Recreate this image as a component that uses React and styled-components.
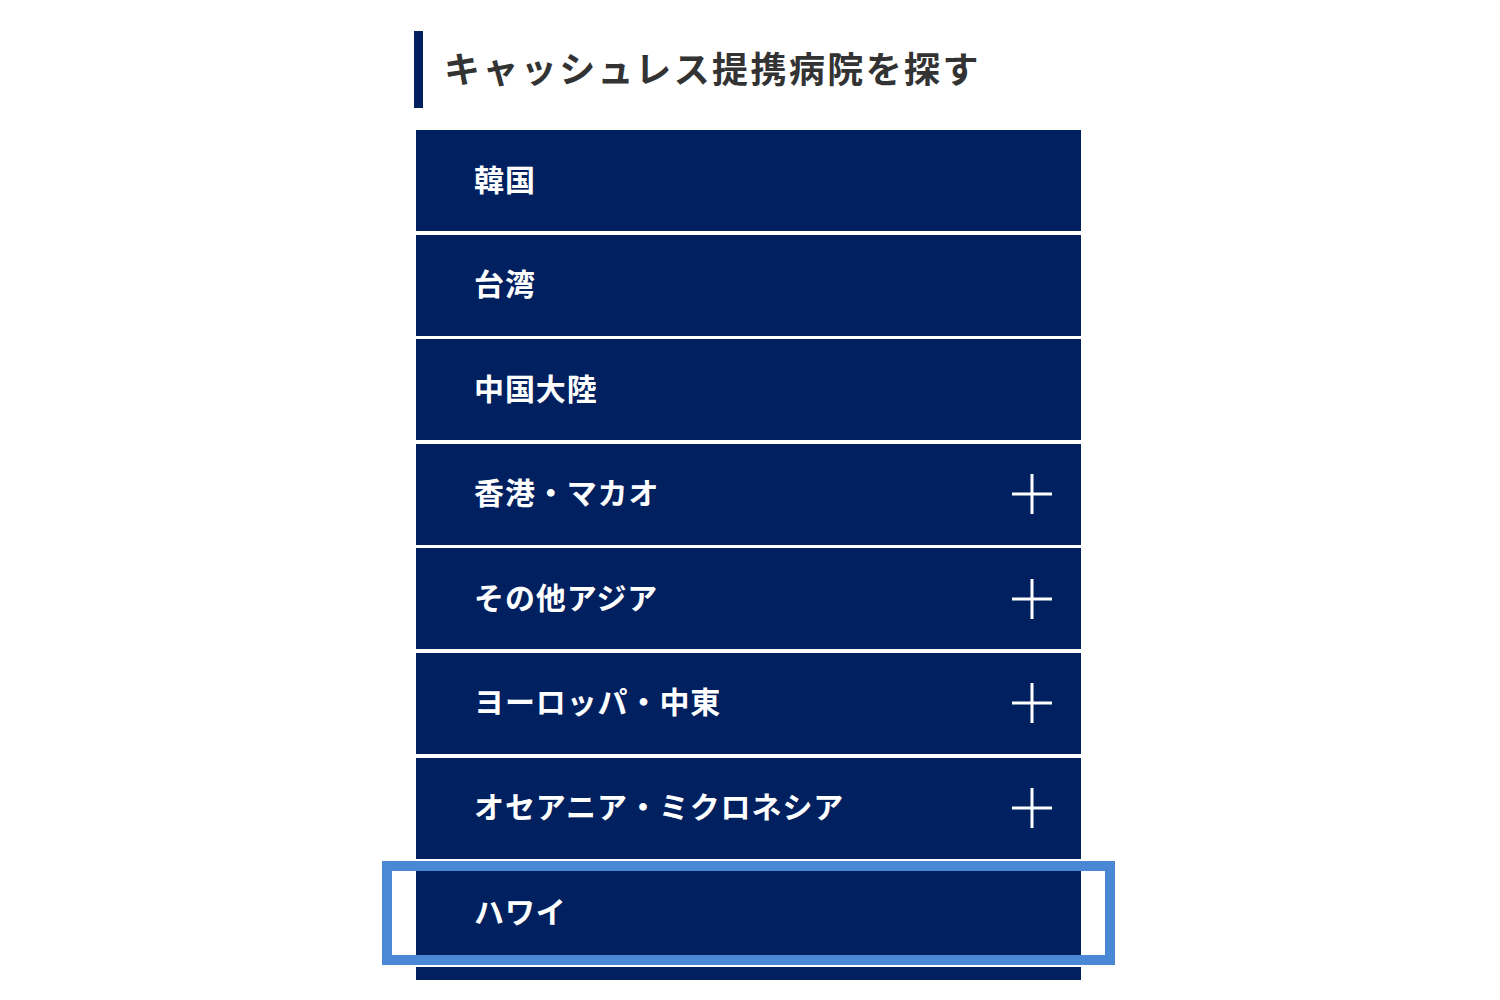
import React from "react";
import styled, { createGlobalStyle } from "styled-components";

const Global = createGlobalStyle`
  html, body {
    margin: 0;
    padding: 0;
    background: #ffffff;
  }
  body {
    font-family: "Noto Sans CJK JP", "Noto Sans", sans-serif;
  }
`;

const Page = styled.div`
  width: 665px;
  margin-left: 416px;
  padding-top: 31px;
`;

const Heading = styled.h2`
  margin: 0 0 22px -2px;
  height: 77px;
  box-sizing: border-box;
  display: flex;
  align-items: center;
  border-left: 9px solid #002060;
  padding: 0 0 6px 21px;
  font-size: 36px;
  font-weight: 700;
  color: #333333;
  letter-spacing: 2.4px;
  line-height: 1;
`;

const Clip = styled.div`
  height: 850px;
  overflow: hidden;
  margin: 0 -40px;
  padding: 0 40px;
`;

const List = styled.ul`
  list-style: none;
  margin: 0;
  padding: 0;
  display: flex;
  flex-direction: column;
  gap: 3.6px;
`;

const Row = styled.li`
  position: relative;
  height: 101px;
  box-sizing: border-box;
  background: #002060;
  color: #ffffff;
  display: flex;
  align-items: center;
  justify-content: space-between;
  padding: 0 29px 0 58px;
  font-size: 30px;
  font-weight: 700;
  letter-spacing: 0.9px;
  cursor: pointer;
`;

const Label = styled.span`
  position: relative;
  top: -3px;
`;

const Focus = styled.span`
  position: absolute;
  left: -34px;
  right: -34px;
  top: -1px;
  bottom: -2px;
  border: 10px solid #4a88d6;
  pointer-events: none;
`;

const Plus = styled.span`
  position: relative;
  width: 40px;
  height: 40px;
  flex: none;

  &::before,
  &::after {
    content: "";
    position: absolute;
    background: #ffffff;
  }
  &::before {
    left: 0;
    right: 0;
    top: 50%;
    height: 3px;
    transform: translateY(-50%);
  }
  &::after {
    top: 0;
    bottom: 0;
    left: 50%;
    width: 3px;
    transform: translateX(-50%);
  }
`;

const regions = [
  { name: "韓国" },
  { name: "台湾" },
  { name: "中国大陸" },
  { name: "香港・マカオ", more: true },
  { name: "その他アジア", more: true },
  { name: "ヨーロッパ・中東", more: true },
  { name: "オセアニア・ミクロネシア", more: true },
  { name: "ハワイ", focused: true },
  { name: "", more: false },
];

export default function App() {
  return (
    <>
      <Global />
      <Page>
        <Heading>キャッシュレス提携病院を探す</Heading>
        <Clip>
          <List>
            {regions.map((r, i) => (
              <Row key={i}>
                <Label>{r.name}</Label>
                {r.more && <Plus />}
                {r.focused && <Focus />}
              </Row>
            ))}
          </List>
        </Clip>
      </Page>
    </>
  );
}
